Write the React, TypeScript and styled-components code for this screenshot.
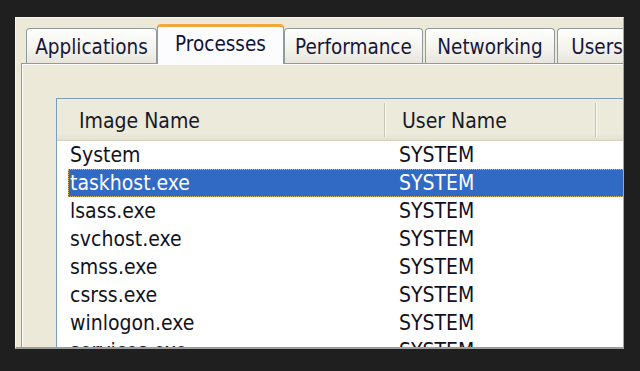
import * as React from 'react';
import styled, { createGlobalStyle, css } from 'styled-components';

const GlobalStyle = createGlobalStyle`
    body {
        margin: 0;
        background: #1f1f1f;
    }
`;

const Page = styled.div`
    width: 640px;
    height: 371px;
    padding: 17px 0 0 15px;
    box-sizing: border-box;
    font-family: "DejaVu Sans Condensed", "DejaVu Sans", sans-serif;
    font-stretch: condensed;
    font-size: 20.5px;
`;

const Window = styled.div`
    width: 609px;
    height: 332px;
    box-sizing: border-box;
    background: #ece9d8;
    border-top: 1px solid #f6f5ef;
    border-left: 1px solid #f6f5ef;
    border-right: 1px solid #a7a7a2;
    border-bottom: 2px solid #9b9b98;
    padding-left: 5px;
    overflow: hidden;
    display: flex;
    flex-direction: column;
`;

const TabStrip = styled.div`
    display: flex;
    align-items: flex-end;
    height: 45px;
    padding-left: 5px;
    gap: 2px;
    position: relative;
    z-index: 1;
    flex-shrink: 0;
`;

const Tab = styled.div<{ $selected?: boolean; $width: number }>`
    width: ${({ $width }) => $width}px;
    flex-shrink: 0;
    box-sizing: border-box;
    height: 35px;
    display: flex;
    align-items: center;
    justify-content: center;
    color: #17173c;
    background: linear-gradient(#ffffff, #f3f2ec 60%, #e7e5dc);
    border: 1px solid #919b9c;
    border-bottom: none;
    border-radius: 4px 4px 0 0;
    padding-top: 2px;

    ${({ $selected }) => $selected && css`
        height: 40px;
        margin: 0 -2px -1px;
        background: #fcfcfe;
        border-top: 3px solid #f2a73c;
        padding-top: 0;
        padding-bottom: 4px;
        color: #121238;
    `}
`;

const Panel = styled.div`
    flex: 1;
    border-top: 1px solid #919b9c;
    border-left: 1px solid #919b9c;
    box-shadow: inset 1px 1px 0 #fdfdfb;
    padding: 34px 0 0 34px;
    min-height: 0;
`;

const ListView = styled.div`
    width: 620px;
    height: 100%;
    box-sizing: border-box;
    border: 1px solid #7f9db9;
    border-bottom: none;
    background: #ffffff;
    color: #12121c;
    font-size: 21px;
`;

const Header = styled.div`
    display: grid;
    grid-template-columns: 329px 211px 1fr;
    height: 41px;
    background: linear-gradient(#ebeadb, #ebeadb 85%, #e3e0cf);
    border-bottom: 1px solid #d6d2c2;
`;

const HeaderCell = styled.div<{ $pad: number }>`
    display: flex;
    align-items: center;
    justify-content: space-between;
    padding-left: ${({ $pad }) => $pad}px;
    padding-top: 3px;
    color: #181828;
`;

const Divider = styled.span`
    width: 1px;
    height: 34px;
    margin-bottom: 3px;
    background: #c7c5b2;
    border-right: 1px solid #fbfbf6;
`;

const Row = styled.div<{ $selected?: boolean }>`
    display: grid;
    grid-template-columns: 318px 1fr;
    height: 28px;
    margin-left: 11px;
    box-sizing: border-box;
    align-items: center;
    border: 1px solid transparent;

    ${({ $selected }) => $selected && css`
        background: #316ac5;
        color: #ffffff;
        border: 1px dotted #d9b064;
    `}
`;

const Cell = styled.span<{ $pad: number }>`
    padding-left: ${({ $pad }) => $pad}px;
    white-space: nowrap;
`;

const tabs = [
    { label: 'Applications', width: 131 },
    { label: 'Processes', width: 127, selected: true },
    { label: 'Performance', width: 139 },
    { label: 'Networking', width: 130 },
    { label: 'Users', width: 80 },
];

const processes = [
    'System',
    'taskhost.exe',
    'lsass.exe',
    'svchost.exe',
    'smss.exe',
    'csrss.exe',
    'winlogon.exe',
    'services.exe',
];

export default function App() {
    return (
        <Page>
            <GlobalStyle />
            <Window>
                <TabStrip>
                    {tabs.map((t) => (
                        <Tab key={t.label} $selected={t.selected} $width={t.width}>{t.label}</Tab>
                    ))}
                </TabStrip>
                <Panel>
                    <ListView>
                        <Header>
                            <HeaderCell $pad={22}>Image Name<Divider /></HeaderCell>
                            <HeaderCell $pad={16}>User Name<Divider /></HeaderCell>
                            <HeaderCell $pad={16} />
                        </Header>
                        {processes.map((p) => (
                            <Row key={p} $selected={p === 'taskhost.exe'}>
                                <Cell $pad={1}>{p}</Cell>
                                <Cell $pad={12}>SYSTEM</Cell>
                            </Row>
                        ))}
                    </ListView>
                </Panel>
            </Window>
        </Page>
    );
}
